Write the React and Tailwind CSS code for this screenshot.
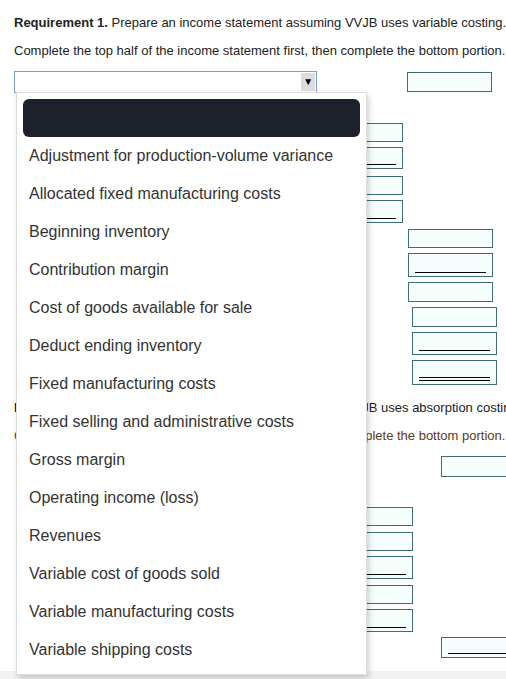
import React from 'react'

const options = [
  'Adjustment for production-volume variance',
  'Allocated fixed manufacturing costs',
  'Beginning inventory',
  'Contribution margin',
  'Cost of goods available for sale',
  'Deduct ending inventory',
  'Fixed manufacturing costs',
  'Fixed selling and administrative costs',
  'Gross margin',
  'Operating income (loss)',
  'Revenues',
  'Variable cost of goods sold',
  'Variable manufacturing costs',
  'Variable shipping costs',
]

// rows of the first statement, below the select line
const topRows = [
  { cls: 'mt-[30px] ml-[318px] h-[19px]', line: 0 },
  { cls: 'mt-[5px] ml-[318px] h-[22px]', line: 1 },
  { cls: 'mt-[7px] ml-[318px] h-[19px]', line: 0 },
  { cls: 'mt-[5px] ml-[318px] h-[23px]', line: 1 },
  { cls: 'mt-[6px] ml-[408px] h-[19px]', line: 0 },
  { cls: 'mt-[5px] ml-[408px] h-[24px]', line: 1 },
  { cls: 'mt-[5px] ml-[408px] h-[20px]', line: 0 },
  { cls: 'mt-[5px] ml-[412px] h-[20px]', line: 0 },
  { cls: 'mt-[5px] ml-[412px] h-[23px]', line: 1 },
  { cls: 'mt-[5px] ml-[412px] h-[25px]', line: 2 },
]

const bottomRows = [
  { cls: 'mt-[30px] ml-[328px] h-[19px]', line: 0 },
  { cls: 'mt-[6px] ml-[328px] h-[19px]', line: 0 },
  { cls: 'mt-[5px] ml-[328px] h-[23px]', line: 1 },
  { cls: 'mt-[6px] ml-[328px] h-[19px]', line: 0 },
  { cls: 'mt-[5px] ml-[328px] h-[23px]', line: 1 },
  { cls: 'mt-[5px] ml-[441px] h-[21px] w-[120px]', line: 1 },
]

function Box({ cls, line }) {
  return (
    <div className={`relative shrink-0 w-[85px] border border-[#3e6e74] bg-[#f6fdfd] ${cls}`}>
      {line > 0 && (
        <div className="absolute left-[6px] right-[6px] bottom-[3px] border-b border-black" />
      )}
      {line > 1 && (
        <div className="absolute left-[6px] right-[6px] bottom-[6px] border-b border-black" />
      )}
    </div>
  )
}

function Dropdown() {
  return (
    <div className="absolute left-[16px] top-[92px] w-[351px] bg-white border border-[#dcdcdc] shadow-[2px_3px_6px_rgba(0,0,0,0.18)] pt-[6px] pb-[5px] px-[6px]">
      <div className="h-[38px] rounded-md bg-[#1d212b]" />
      {options.map((o) => (
        <div key={o} className="h-[38px] flex items-center px-[6px] text-[16px] text-[#333]">
          {o}
        </div>
      ))}
    </div>
  )
}

export default function App() {
  return (
    <div className="relative w-[506px] h-[679px] overflow-hidden bg-white font-['Liberation_Sans',Arial,sans-serif] text-[#222]">
      <div className="h-[671px] px-[14px] pt-[15px]">
        <p className="text-[13px] leading-[16px] whitespace-nowrap">
          <b>Requirement 1.</b> Prepare an income statement assuming VVJB uses variable costing.
        </p>
        <p className="mt-[12px] text-[13px] leading-[16px] whitespace-nowrap">
          Complete the top half of the income statement first, then complete the bottom portion.
        </p>

        <div className="mt-[12px] flex items-start -ml-[14px]">
          <div className="ml-[14px] w-[304px] h-[22px] border border-[#7d9bd3] flex justify-end items-center pr-[1px]">
            <div className="w-[14px] h-[18px] bg-[#dcdcdc] flex items-center justify-center text-[10px] leading-none text-black">
              ▼
            </div>
          </div>
          <div className="ml-[90px] mt-[1px] w-[85px] h-[20px] border border-[#3e6e74] bg-[#f6fdfd]" />
        </div>

        <div className="-ml-[14px]">
          {topRows.map((r, i) => (
            <Box key={i} {...r} />
          ))}
        </div>

        <p className="mt-[15px] text-[13px] leading-[16px] whitespace-nowrap">
          <b>Requirement 2.</b> Prepare an income statement assuming VVJB uses absorption costing.
        </p>
        <p className="mt-[12px] text-[13px] leading-[16px] whitespace-nowrap text-[#5a3a20]">
          Complete the top half of the income statement first, then complete the bottom portion.
        </p>
        <div className="-ml-[14px]">
          <div className="mt-[12px] ml-[441px] w-[120px] h-[21px] border border-[#3e6e74] bg-[#f6fdfd]" />
          {bottomRows.map((r, i) => (
            <Box key={i} {...r} />
          ))}
        </div>
      </div>
      <div className="h-[8px] bg-[#f1f1f1]" />
      <Dropdown />
    </div>
  )
}
